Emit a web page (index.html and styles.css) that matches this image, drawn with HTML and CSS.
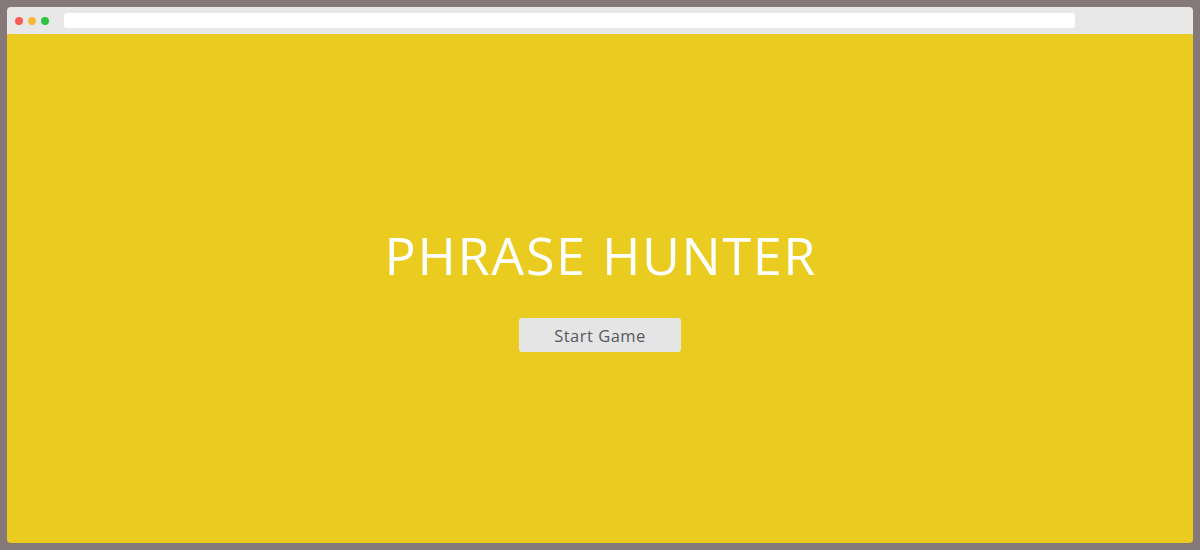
FILE: index.html
```html
<!DOCTYPE html>
<html>
<head>
<meta charset="utf-8">
<link rel="stylesheet" href="styles.css">
</head>
<body>
<div class="window">
  <div class="toolbar">
    <div class="dots">
      <span class="dot red"></span>
      <span class="dot yellow"></span>
      <span class="dot green"></span>
    </div>
    <div class="address"></div>
  </div>
  <div class="screen">
    <h2 class="title">PHRASE HUNTER</h2>
    <button class="start">Start Game</button>
  </div>
</div>
</body>
</html>
```
FILE: styles.css
```css
html, body {
  margin: 0;
  padding: 0;
}
body {
  background: #857879;
  width: 1200px;
  height: 550px;
  padding: 7px;
  box-sizing: border-box;
  font-family: "Open Sans", "Noto Sans", sans-serif;
}
.window {
  height: 536px;
  display: flex;
  flex-direction: column;
  border-radius: 4px;
  overflow: hidden;
}
.toolbar {
  height: 27px;
  background: #e8e8e8;
  display: flex;
  align-items: center;
  padding-left: 8px;
  padding-right: 118px;
  gap: 15px;
}
.dots {
  display: flex;
  gap: 5px;
}
.dot {
  width: 8px;
  height: 8px;
  border-radius: 50%;
}
.red { background: #f95b57; }
.yellow { background: #f6b73a; }
.green { background: #2fc440; }
.address {
  flex: 1;
  height: 15px;
  background: #ffffff;
  border-radius: 3px;
  margin-top: -1px;
}
.screen {
  flex: 1;
  background: #e9cc1f;
  display: flex;
  flex-direction: column;
  align-items: center;
  padding-top: 191px;
}
.title {
  margin: 0;
  padding-left: 1.7px;
  color: #ffffff;
  font-weight: 400;
  font-size: 52px;
  line-height: 60px;
  letter-spacing: 1.7px;
}
.start {
  margin-top: 33px;
  width: 162px;
  height: 34px;
  border: none;
  border-radius: 3px;
  background: #e5e5e5;
  color: #555a5f;
  font-family: "Open Sans", "Noto Sans", sans-serif;
  font-size: 16.5px;
  letter-spacing: 0.5px;
  padding: 0;
}
```
